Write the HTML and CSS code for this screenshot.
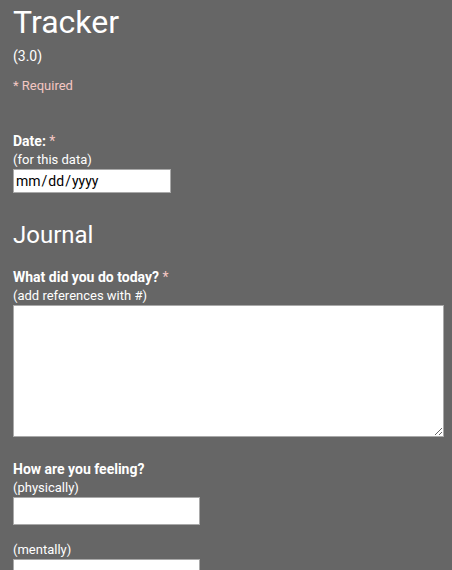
FILE: index.html
```html
<!DOCTYPE html>
<html>
<head>
<meta charset="utf-8">
<link rel="stylesheet" href="styles.css">
</head>
<body>
<form class="form">
  <h1 class="title">Tracker</h1>
  <div class="version">(3.0)</div>
  <div class="required-note">* Required</div>

  <div class="field field-date">
    <label class="label">Date: <span class="star">*</span></label>
    <div class="hint">(for this data)</div>
    <div class="date-input"><span>mm</span><span class="slash">/</span><span>dd</span><span class="slash">/</span><span>yyyy</span></div>
  </div>

  <h2 class="section">Journal</h2>

  <div class="field field-journal">
    <label class="label">What did you do today? <span class="star">*</span></label>
    <div class="hint">(add references with #)</div>
    <textarea class="textarea"></textarea>
  </div>

  <div class="field field-feel">
    <label class="label">How are you feeling?</label>
    <div class="hint">(physically)</div>
    <input class="text-input" type="text">
    <div class="hint hint-gap">(mentally)</div>
    <input class="text-input" type="text">
  </div>
</form>
</body>
</html>
```
FILE: styles.css
```css
html, body {
  margin: 0;
  padding: 0;
  background: #666666;
}
body {
  font-family: Roboto, "Liberation Sans", sans-serif;
  color: #ffffff;
  padding: 0 13px;
}
.form {
  display: flex;
  flex-direction: column;
}
.title {
  font-size: 32px;
  font-weight: 400;
  margin: 2px 0 0 0;
  line-height: 40px;
}
.version {
  font-size: 14px;
  line-height: 20px;
  margin-top: 4px;
}
.required-note {
  font-size: 13px;
  color: #f4c7c3;
  margin-top: 12px;
  line-height: 16px;
}
.field {
  display: flex;
  flex-direction: column;
  align-items: flex-start;
}
.field-date {
  margin-top: 37px;
}
.label {
  font-size: 14px;
  font-weight: 700;
  line-height: 20px;
}
.star {
  color: #f4c7c3;
  font-weight: 400;
}
.hint {
  font-size: 13px;
  line-height: 18px;
}
.hint-gap {
  margin-top: 16px;
}
.date-input {
  box-sizing: border-box;
  width: 158px;
  height: 24px;
  border: 1px solid #a9a9a9;
  background: #fff;
  font-size: 14px;
  line-height: 22px;
  color: #000;
  padding: 0 2px;
  display: flex;
}
.slash {
  padding: 0 1px;
}
.section {
  font-size: 24px;
  font-weight: 400;
  margin: 27px 0 0 0;
  line-height: 30px;
}
.field-journal {
  margin-top: 17px;
}
.textarea {
  box-sizing: border-box;
  width: 431px;
  height: 132px;
  margin: 0;
  border: 1px solid #a9a9a9;
  background: #fff;
  display: block;
}
.field-feel {
  margin-top: 22px;
}
.text-input {
  box-sizing: border-box;
  width: 187px;
  height: 28px;
  margin: 0;
  border: 1px solid #a9a9a9;
  background: #fff;
  display: block;
}
```
